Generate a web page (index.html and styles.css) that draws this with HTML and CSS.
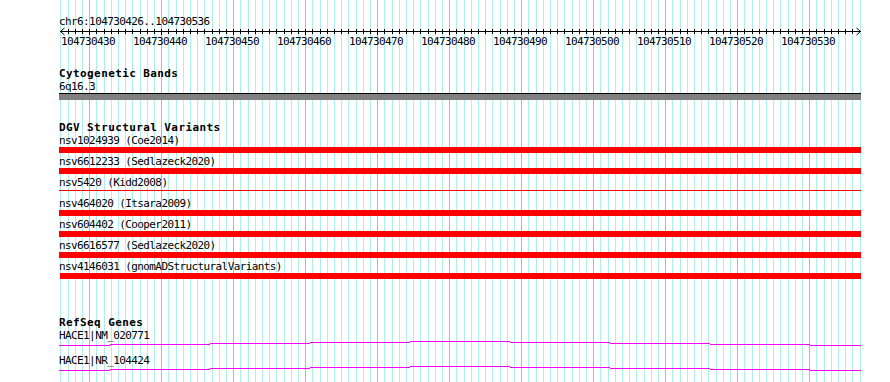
FILE: index.html
```html
<!DOCTYPE html>
<html lang="en">

<head>
    <meta charset="UTF-8">
    <title>chr6:104730426..104730536</title>
    <link rel="stylesheet" href="styles.css">
    <script>
        const START = 104730426;
        const END = 104730536;
        const LEFT = 60.8;   // x of the first base boundary
        const STEP = 7.2;    // pixels per base
        const ORIGIN = 59;   // left edge of the track area
        const NS = 'http://www.w3.org/2000/svg';

        function baseX(i) {
            return Math.floor(LEFT + STEP * i);
        }

        function addRect(svg, cls, x, y, w, h) {
            const r = document.createElementNS(NS, 'rect');
            r.setAttribute('class', cls);
            r.setAttribute('x', x);
            r.setAttribute('y', y);
            r.setAttribute('width', w);
            r.setAttribute('height', h);
            svg.appendChild(r);
        }

        function buildGrid() {
            const svg = document.getElementById('grid');
            for (let i = 0; i <= END - START + 1; i++) {
                const major = (START + i) % 10 === 0;
                addRect(svg, major ? 'major' : 'minor', baseX(i), 0, 1, 382);
            }
        }

        function buildRuler() {
            const svg = document.getElementById('ruler');
            for (let i = 1; i <= END - START; i++) {
                const major = (START + i) % 10 === 0;
                addRect(svg, 'tick', baseX(i) - ORIGIN, 1, 1, major ? 6 : 5);
            }
        }

        // intron connector: one-pixel steps every 100px, rising to the middle
        function buildIntrons() {
            const steps = [[51, 7], [100, 6], [100, 5], [100, 4], [100, 3],
                           [100, 4], [100, 5], [100, 6], [51, 7]];
            document.querySelectorAll('.intron').forEach(row => {
                steps.forEach(([w, y]) => {
                    const seg = document.createElement('span');
                    seg.style.width = w + 'px';
                    seg.style.marginTop = y + 'px';
                    row.appendChild(seg);
                });
            });
        }

        document.addEventListener('DOMContentLoaded', () => {
            buildGrid();
            buildRuler();
            buildIntrons();
        });
    </script>
</head>

<body>
    <div class="panel">
        <svg class="grid" id="grid" width="890" height="382"></svg>

        <div class="tracks">
            <div class="location">chr6:104730426..104730536</div>
            <svg class="ruler" id="ruler" width="804" height="7">
                <rect class="tick" x="1" y="3" width="801" height="1"></rect>
                <polyline class="arrow" points="5.5,0 1.5,3.5 5.5,7"></polyline>
                <polyline class="arrow" points="797.5,0 801.5,3.5 797.5,7"></polyline>
            </svg>
            <div class="ruler-labels">
                <span>104730430</span>
                <span>104730440</span>
                <span>104730450</span>
                <span>104730460</span>
                <span>104730470</span>
                <span>104730480</span>
                <span>104730490</span>
                <span>104730500</span>
                <span>104730510</span>
                <span>104730520</span>
                <span>104730530</span>
            </div>

            <div class="track cytoband">
                <div class="track-title">Cytogenetic Bands</div>
                <div class="label">6q16.3</div>
                <div class="band"></div>
            </div>

            <div class="track dgv">
                <div class="track-title">DGV Structural Variants</div>
                <div class="variant">
                    <div class="label">nsv1024939 (Coe2014)</div>
                    <div class="bar"></div>
                </div>
                <div class="variant">
                    <div class="label">nsv6612233 (Sedlazeck2020)</div>
                    <div class="bar"></div>
                </div>
                <div class="variant">
                    <div class="label">nsv5420 (Kidd2008)</div>
                    <div class="bar thin"></div>
                </div>
                <div class="variant">
                    <div class="label">nsv464020 (Itsara2009)</div>
                    <div class="bar"></div>
                </div>
                <div class="variant">
                    <div class="label">nsv604402 (Cooper2011)</div>
                    <div class="bar"></div>
                </div>
                <div class="variant">
                    <div class="label">nsv6616577 (Sedlazeck2020)</div>
                    <div class="bar"></div>
                </div>
                <div class="variant">
                    <div class="label">nsv4146031 (gnomADStructuralVariants)</div>
                    <div class="bar inset"></div>
                </div>
            </div>

            <div class="track refseq">
                <div class="track-title">RefSeq Genes</div>
                <div class="gene">
                    <div class="label">HACE1|NM_020771</div>
                    <div class="intron"></div>
                </div>
                <div class="gene">
                    <div class="label">HACE1|NR_104424</div>
                    <div class="intron"></div>
                </div>
            </div>
        </div>
    </div>
</body>

</html>
```

FILE: styles.css
```css
body {
    margin: 0;
    padding: 0;
    background-color: white;
    font-family: "DejaVu Sans Mono", "Liberation Mono", monospace;
    font-size: 11px;
    line-height: 13px;
    letter-spacing: -0.6px;
    color: black;
}

.panel {
    position: relative;
    width: 890px;
    height: 382px;
    overflow: hidden;
}

/* grid sits behind the tracks */
.grid {
    position: absolute;
    top: 0;
    left: 0;
    shape-rendering: crispEdges;
}

.grid .minor {
    fill: #aeeeee;
}

.grid .major {
    fill: #87c4ea;
}

.tracks {
    position: relative;
    padding: 15px 0 0 59px;
}

.location,
.label {
    height: 13px;
    white-space: nowrap;
}

.ruler {
    display: block;
    overflow: visible;
    shape-rendering: crispEdges;
}

.ruler .tick {
    fill: black;
}

.ruler .arrow {
    fill: none;
    stroke: black;
    stroke-width: 1;
    shape-rendering: auto;
}

.ruler-labels {
    display: flex;
    margin-left: -7px;
    height: 13px;
}

.ruler-labels span {
    flex: none;
    width: 72px;
    text-align: center;
}

.track-title {
    height: 13px;
    font-weight: bold;
    letter-spacing: 0.4px;
    white-space: nowrap;
}

.cytoband {
    margin-top: 19px;
}

.band {
    width: 802px;
    height: 6px;
    border-top: 1px solid black;
    background-color: #808080;
}

.dgv {
    margin-top: 21px;
}

.variant {
    padding-bottom: 2px;
}

.bar {
    width: 802px;
    height: 6px;
    background-color: #ff0000;
}

.bar.inset {
    width: 801px;
    margin-left: 1px;
}

/* same 6px slot, only a hairline is painted */
.bar.thin {
    height: 1px;
    padding: 1px 0 4px;
    background-clip: content-box;
}

.refseq {
    margin-top: 35px;
}

.intron {
    display: flex;
    align-items: flex-start;
    height: 16px;
    margin-top: -4px;
}

.intron span {
    flex: none;
    height: 1px;
    background-color: #ff00ff;
}
```
